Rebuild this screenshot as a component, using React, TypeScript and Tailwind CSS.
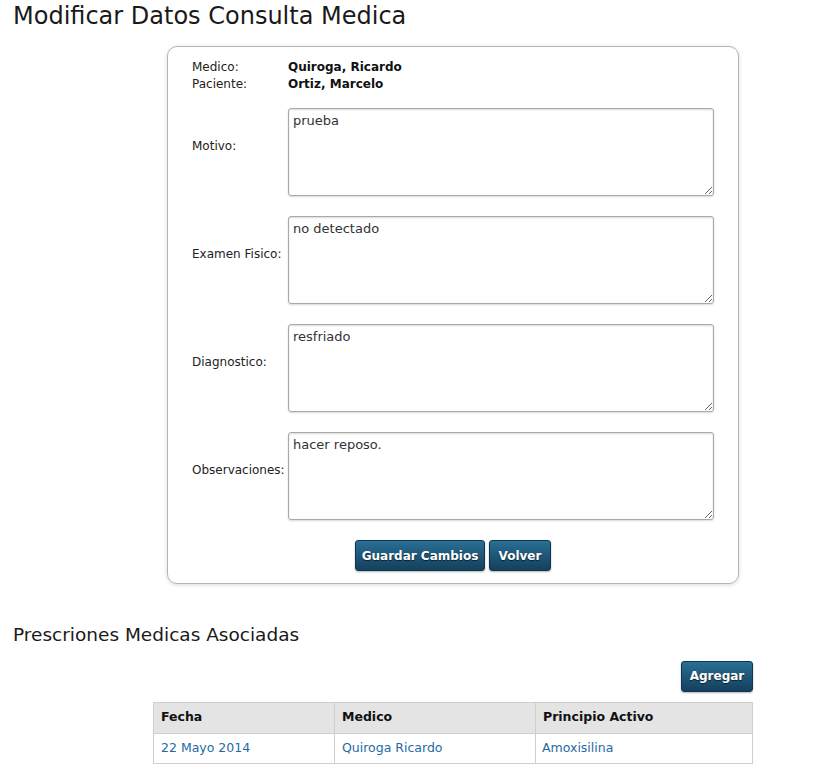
import React from "react";

const F = { fontFamily: '"DejaVu Sans", Verdana, sans-serif' };

function Field({ label, value }: { label: string; value: string }) {
  return (
    <div className="flex items-center">
      <div className="w-[96px] text-[12px] text-[#222] pb-[12px]">{label}</div>
      <textarea
        defaultValue={value}
        className="w-[426px] h-[88px] border border-[#a9a9a9] rounded-[3px] shadow-[inset_0_1px_2px_rgba(0,0,0,0.15),0_1px_2px_rgba(0,0,0,0.15)] px-[4px] py-[2px] text-[13px] text-[#333] outline-none resize"
        style={F}
      />
    </div>
  );
}

function Btn({ children, className = "" }: { children: React.ReactNode; className?: string }) {
  return (
    <button
      className={
        "h-[31px] rounded-[3px] border border-[#0f3550] bg-gradient-to-b from-[#2a6f95] to-[#14405c] text-white font-bold text-[12px] [text-shadow:0_1px_1px_rgba(0,0,0,0.6)] shadow-[0_1px_2px_rgba(0,0,0,0.3)] " +
        className
      }
      style={F}
    >
      {children}
    </button>
  );
}

export default function App() {
  return (
    <div className="bg-white w-[826px] h-[767px] overflow-hidden text-[#222]" style={F}>
      <h1 className="text-[24px] leading-none pl-[13px] pt-[4px] text-[#1a1a1a]">Modificar Datos Consulta Medica</h1>

      <div className="ml-[167px] mt-[18px] w-[572px] h-[538px] border border-[#b5b5b5] rounded-[10px] shadow-[0_1px_4px_rgba(0,0,0,0.15)] pl-[24px] pt-[12px]">
        <div className="grid grid-cols-[96px_1fr] text-[12px] leading-[17px]">
          <div>Medico:</div>
          <div className="font-bold text-[#111]">Quiroga, Ricardo</div>
          <div>Paciente:</div>
          <div className="font-bold text-[#111]">Ortiz, Marcelo</div>
        </div>
        <div className="flex flex-col gap-[20px] mt-[15px]">
          <Field label="Motivo:" value="prueba" />
          <Field label="Examen Fisico:" value="no detectado" />
          <Field label="Diagnostico:" value="resfriado" />
          <Field label="Observaciones:" value="hacer reposo." />
        </div>
        <div className="flex justify-center gap-[4px] mt-[20px] pr-[24px]">
          <Btn className="w-[130px]">Guardar Cambios</Btn>
          <Btn className="w-[62px]">Volver</Btn>
        </div>
      </div>

      <h2 className="text-[18.5px] leading-none pl-[13px] mt-[42px] text-[#1a1a1a]">Prescriones Medicas Asociadas</h2>

      <div className="w-[600px] ml-[153px] mt-[16px]">
        <div className="flex justify-end">
          <Btn className="w-[72px]">Agregar</Btn>
        </div>
        <table className="w-full mt-[10px] border-collapse text-[12.5px]">
          <thead>
            <tr className="bg-[#e4e4e4] h-[31px]">
              <th className="w-[181px] border border-[#cfcfcf] text-left font-bold px-[7px] text-[#111]">Fecha</th>
              <th className="w-[201px] border border-[#cfcfcf] text-left font-bold px-[7px] text-[#111]">Medico</th>
              <th className="border border-[#cfcfcf] text-left font-bold px-[7px] text-[#111]">Principio Activo</th>
            </tr>
          </thead>
          <tbody>
            <tr className="h-[30px] text-[#1f6aa5]">
              <td className="border border-[#cfcfcf] px-[7px]">22 Mayo 2014</td>
              <td className="border border-[#cfcfcf] px-[7px]">Quiroga Ricardo</td>
              <td className="border border-[#cfcfcf] px-[6px]">Amoxisilina</td>
            </tr>
          </tbody>
        </table>
      </div>
    </div>
  );
}
